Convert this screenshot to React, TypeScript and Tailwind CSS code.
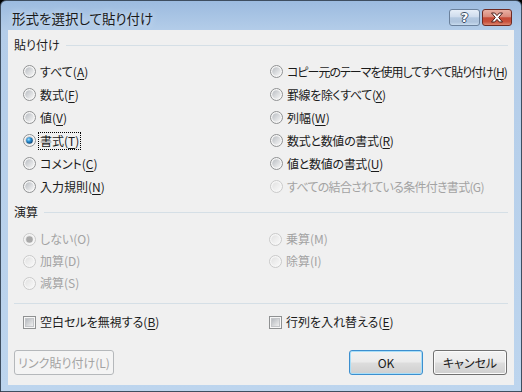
import React from 'react';

const FONT = "font-['Noto_Sans_CJK_JP','Noto_Sans',sans-serif] [font-feature-settings:'palt']";

type Item = { label: string; k: string; checked?: boolean; disabled?: boolean; focus?: boolean; tight?: string };

const pasteLeft: Item[] = [
  { label: 'すべて', k: 'A' },
  { label: '数式', k: 'F' },
  { label: '値', k: 'V' },
  { label: '書式', k: 'T', checked: true, focus: true },
  { label: 'コメント', k: 'C' },
  { label: '入力規則', k: 'N' },
];

const pasteRight: Item[] = [
  { label: 'コピー元のテーマを使用してすべて貼り付け', k: 'H', tight: 'tracking-[-1px]' },
  { label: '罫線を除くすべて', k: 'X', tight: 'tracking-[-0.4px]' },
  { label: '列幅', k: 'W' },
  { label: '数式と数値の書式', k: 'R', tight: 'tracking-[-0.3px]' },
  { label: '値と数値の書式', k: 'U', tight: 'tracking-[-0.3px]' },
  { label: 'すべての結合されている条件付き書式', k: 'G', disabled: true, tight: 'tracking-[-0.7px]' },
];

const opLeft: Item[] = [
  { label: 'しない', k: 'O', checked: true, disabled: true },
  { label: '加算', k: 'D', disabled: true },
  { label: '減算', k: 'S', disabled: true },
];

const opRight: Item[] = [
  { label: '乗算', k: 'M', disabled: true },
  { label: '除算', k: 'I', disabled: true },
];

function RadioMark({ checked, disabled }: { checked?: boolean; disabled?: boolean }) {
  return (
    <svg width="13" height="13" viewBox="0 0 13 13" className="shrink-0">
      <defs>
        <linearGradient id="rfill" x1="0" y1="0" x2="1" y2="1">
          <stop offset="0" stopColor="#b9bdc2" />
          <stop offset="1" stopColor="#f7f7f7" />
        </linearGradient>
        <linearGradient id="rfilld" x1="0" y1="0" x2="1" y2="1">
          <stop offset="0" stopColor="#e2e2e2" />
          <stop offset="1" stopColor="#f8f8f8" />
        </linearGradient>
        <radialGradient id="rdot" cx="0.38" cy="0.35" r="0.7">
          <stop offset="0" stopColor="#9fe0ff" />
          <stop offset="0.45" stopColor="#2a8fd2" />
          <stop offset="1" stopColor="#0b3f6e" />
        </radialGradient>
      </defs>
      <circle cx="6.5" cy="6.5" r="6" fill="#f6f6f6" stroke={disabled ? '#c9c9c9' : '#8f9192'} />
      <circle cx="6.5" cy="6.5" r="4.3" fill={disabled ? 'url(#rfilld)' : 'url(#rfill)'} />
      {checked && (
        <circle cx="6.5" cy="6.5" r="3.3" fill={disabled ? '#a9a9a9' : 'url(#rdot)'} />
      )}
    </svg>
  );
}

function CheckMark() {
  return (
    <svg width="13" height="13" viewBox="0 0 13 13" className="shrink-0">
      <defs>
        <linearGradient id="cfill" x1="0" y1="0" x2="1" y2="1">
          <stop offset="0" stopColor="#b3b7bc" />
          <stop offset="1" stopColor="#f2f2f2" />
        </linearGradient>
      </defs>
      <rect x="0.5" y="0.5" width="12" height="12" fill="#f7f7f7" stroke="#8f9192" />
      <rect x="2.5" y="2.5" width="8" height="8" fill="url(#cfill)" stroke="#c4c6c9" />
    </svg>
  );
}

function Label({ label, k, disabled }: { label: string; k: string; disabled?: boolean }) {
  return (
    <>
      {label}(
      {disabled ? k : <span className="underline underline-offset-[2px]">{k}</span>})
    </>
  );
}

function RadioRow({ item, h }: { item: Item; h: string }) {
  return (
    <div className={`flex items-center ${h}`}>
      <RadioMark checked={item.checked} disabled={item.disabled} />
      <span
        className={`ml-[2px] px-[1px] border leading-[16px] whitespace-nowrap ${item.tight ?? ''} ${
          item.focus ? 'border-dotted border-black' : 'border-transparent'
        } ${item.disabled ? 'text-[#a3a3a3]' : 'text-[#1b1b1b]'}`}
      >
        <Label label={item.label} k={item.k} disabled={item.disabled} />
      </span>
    </div>
  );
}

function GroupHead({ title }: { title: string }) {
  return (
    <div className="flex items-center h-[18px]">
      <span className="text-[#1b1b1b] leading-[18px]">{title}</span>
      <div className="flex-1 ml-[6px] h-px bg-[#d5dfe6]" />
    </div>
  );
}

function WinButton({ children, primary, disabled, w }: { children: React.ReactNode; primary?: boolean; disabled?: boolean; w: string }) {
  if (disabled) {
    return (
      <div className={`${w} h-[25px] rounded-[3px] border border-[#b5b8bb] bg-[#f4f4f4] text-[#a3a3a3] flex items-center justify-center`}>
        {children}
      </div>
    );
  }
  return (
    <div
      className={`${w} h-[25px] rounded-[3px] border ${
        primary ? 'border-[#3c8fcf] shadow-[inset_0_0_0_1px_#a8def8]' : 'border-[#707070] shadow-[inset_0_0_0_1px_#fbfbfb]'
      } bg-[linear-gradient(#f2f2f2_0%,#ebebeb_48%,#dddddd_52%,#cfcfcf_100%)] text-[#1b1b1b] flex items-center justify-center`}
    >
      {children}
    </div>
  );
}

export default function App() {
  return (
    <div className={`w-[522px] h-[392px] bg-black ${FONT} text-[12px]`}>
      <div className="w-full h-full flex flex-col rounded-t-[6px] border border-[#3e4e60] bg-[linear-gradient(#9cbbdf_0px,#b4cde9_30px,#bdd5ee_100%)]">
        {/* caption */}
        <div className="h-[29px] shrink-0 flex items-start pl-[11px] pr-[9px]">
          <span className="mt-[7px] text-[13.5px] leading-[20px] text-[#1a1a1a] [text-shadow:0_0_6px_#e6f0fb]">
            形式を選択して貼り付け
          </span>
          <div className="ml-auto mt-[8px] flex gap-[2px]">
            <div className="w-[31px] h-[17px] rounded-[3px] border border-[#6b819c] bg-[linear-gradient(#e6eef8_0%,#cfdced_45%,#b3c8e0_52%,#afc4dd_80%,#c9dcef_100%)] flex items-center justify-center">
              <span className="font-['DejaVu_Sans',sans-serif] font-bold text-[13px] leading-[13px] text-white [text-shadow:1px_0_0_#3a4d66,-1px_0_0_#3a4d66,0_1px_0_#3a4d66,0_-1px_0_#3a4d66]">
                ?
              </span>
            </div>
            <div className="w-[30px] h-[17px] rounded-[3px] border border-[#6e2a22] bg-[linear-gradient(#eab0a3_0%,#d98a7b_45%,#c54a36_52%,#c8513c_78%,#dc866f_100%)] flex items-center justify-center">
              <svg width="14" height="11" viewBox="0 0 14 11">
                <path
                  d="M1.5 1h3.2L7 3.6 9.3 1h3.2L8.7 5.5l3.8 4.5H9.3L7 7.4 4.7 10H1.5l3.8-4.5z"
                  fill="#ffffff"
                  stroke="#4a1d18"
                  strokeWidth="1"
                  strokeLinejoin="round"
                />
              </svg>
            </div>
          </div>
        </div>

        {/* client */}
        <div className="flex-1 mx-[7px] mb-[6px] bg-[#f0f0f0] flex flex-col px-[6px] pt-[6px]">
          <GroupHead title="貼り付け" />
          <div className="flex mt-[6px] pl-[9px]">
            <div className="w-[247px] shrink-0 flex flex-col">
              {pasteLeft.map((it) => (
                <RadioRow key={it.k} item={it} h="h-[23px]" />
              ))}
            </div>
            <div className="flex-1 flex flex-col">
              {pasteRight.map((it) => (
                <RadioRow key={it.k} item={it} h="h-[23px]" />
              ))}
            </div>
          </div>

          <div className="mt-[5px]">
            <GroupHead title="演算" />
          </div>
          <div className="flex mt-[7px] pl-[9px]">
            <div className="w-[246px] shrink-0 flex flex-col">
              {opLeft.map((it) => (
                <RadioRow key={it.k} item={it} h="h-[22px]" />
              ))}
            </div>
            <div className="flex-1 flex flex-col">
              {opRight.map((it) => (
                <RadioRow key={it.k} item={it} h="h-[22px]" />
              ))}
            </div>
          </div>

          <div className="mt-[9px] h-px bg-[#d5dfe6]" />

          <div className="flex mt-[9px] pl-[9px] h-[18px] items-center">
            <div className="w-[246px] shrink-0 flex items-center">
              <CheckMark />
              <span className="ml-[4px] text-[#1b1b1b]">
                <Label label="空白セルを無視する" k="B" />
              </span>
            </div>
            <div className="flex items-center">
              <CheckMark />
              <span className="ml-[4px] text-[#1b1b1b]">
                <Label label="行列を入れ替える" k="E" />
              </span>
            </div>
          </div>

          <div className="flex mt-[19px] pr-[1px]">
            <WinButton disabled w="w-[100px]">リンク貼り付け(L)</WinButton>
            <div className="ml-auto flex gap-[10px]">
              <WinButton primary w="w-[74px]">OK</WinButton>
              <WinButton w="w-[74px]">キャンセル</WinButton>
            </div>
          </div>
        </div>
      </div>
    </div>
  );
}
